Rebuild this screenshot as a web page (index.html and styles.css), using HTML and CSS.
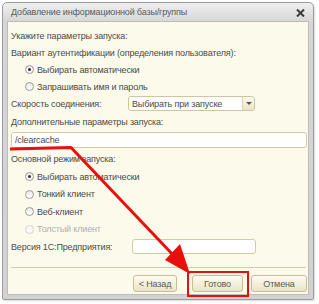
FILE: index.html
```html
<!DOCTYPE html>
<html lang="ru">
<head>
    <meta charset="UTF-8">
    <title>Добавление информационной базы/группы</title>
    <link rel="stylesheet" href="styles.css">
</head>
<body>
    <div class="window">
        <div class="titlebar">
            <span class="title">Добавление информационной базы/группы</span>
            <svg class="close" width="9" height="8" viewBox="0 0 9 8">
                <path d="M1 0.5 L8 7.5 M8 0.5 L1 7.5" stroke="#3a3a3a" stroke-width="2"/>
            </svg>
        </div>
        <div class="content">
            <div class="line">Укажите параметры запуска:</div>
            <div class="line">Вариант аутентификации (определения пользователя):</div>
            <div class="line radio"><span class="dot checked"></span>Выбирать автоматически</div>
            <div class="line radio"><span class="dot"></span>Запрашивать имя и пароль</div>

            <div class="line field-row speed">
                <span class="field-label">Скорость соединения:</span>
                <div class="select">
                    <span class="select-text">Выбирать при запуске</span>
                    <span class="select-btn"><span class="caret"></span></span>
                </div>
            </div>

            <div class="line tall">Дополнительные параметры запуска:</div>
            <div class="input wide">/clearcache</div>

            <div class="line main-mode">Основной режим запуска:</div>
            <div class="line radio"><span class="dot checked"></span>Выбирать автоматически</div>
            <div class="line radio h18"><span class="dot"></span>Тонкий клиент</div>
            <div class="line radio"><span class="dot"></span>Веб-клиент</div>
            <div class="line radio h18 disabled"><span class="dot"></span>Толстый клиент</div>

            <div class="line field-row version">
                <span class="field-label">Версия 1С:Предприятия:</span>
                <div class="input short"></div>
            </div>

            <div class="separator"></div>

            <div class="buttons">
                <button class="btn back">&lt; Назад</button>
                <button class="btn done">Готово</button>
                <button class="btn cancel">Отмена</button>
            </div>
        </div>
    </div>

    <!-- red annotation drawn over the dialog -->
    <svg class="annot" width="319" height="304" viewBox="0 0 319 304">
        <polyline points="10,149 71,147.5 175,257" fill="none" stroke="#e8100c" stroke-width="3" stroke-linejoin="round"/>
        <polygon points="190,274 165,260 180,244" fill="#e8100c"/>
        <rect x="188" y="272" width="60" height="24" fill="none" stroke="#e8100c" stroke-width="2"/>
    </svg>
</body>
</html>
```

FILE: styles.css
```css
* {
    box-sizing: border-box;
}

body {
    margin: 0;
    width: 319px;
    height: 304px;
    overflow: hidden;
    position: relative;
    background: #ffffff;
    font-family: "Liberation Sans", Arial, sans-serif;
    font-size: 9px;
    letter-spacing: -0.15px;
    color: #4a4a4a;
}

.window {
    margin: 2px 0 0 2px;
    width: 312px;
    height: 298px;
    border: 1px solid #9c9c9c;
    border-radius: 5px 5px 2px 2px;
    background: linear-gradient(#efefef, #d6d6d6 19px, #d2d2d2);
    padding: 0 4px 4px;
    display: flex;
    flex-direction: column;
    box-shadow: 1px 1px 2px rgba(0, 0, 0, 0.15);
}

.titlebar {
    height: 18px;
    display: flex;
    align-items: center;
    justify-content: space-between;
    padding: 0 4px 0 4px;
}

.title {
    color: #5a5a5a;
}

.close {
    margin-top: 1px;
}

.content {
    flex: 1;
    background: #fcfaeb;
    border: 1px solid #bcbcbc;
    padding: 5px 1px 0 3px;
    display: flex;
    flex-direction: column;
}

.line {
    height: 17px;
    display: flex;
    align-items: center;
    white-space: nowrap;
}

.line.tall {
    height: 19px;
}

.line.h18 {
    height: 18px;
}

.line.main-mode {
    height: 18px;
    margin-top: 1px;
}

.radio {
    padding-left: 14px;
}

.radio.disabled {
    color: #b0b0b0;
}

.dot {
    width: 9px;
    height: 9px;
    border-radius: 50%;
    border: 1px solid #9a9a9a;
    background: linear-gradient(#e9e9e9, #ffffff);
    margin-right: 3px;
    display: flex;
    align-items: center;
    justify-content: center;
}

.disabled .dot {
    border-color: #d2d2d2;
    background: #fbfbf6;
}

.dot.checked::after {
    content: "";
    width: 3px;
    height: 3px;
    border-radius: 50%;
    background: #333333;
}

.field-row .field-label {
    width: 117px;
}

.version .field-label {
    width: 121px;
}

.select {
    width: 127px;
    height: 15px;
    border: 1px solid #cfc6a0;
    border-radius: 3px;
    background: #ffffff;
    display: flex;
    align-items: center;
    overflow: hidden;
}

.select-text {
    flex: 1;
    padding-left: 3px;
    color: #4a4a4a;
}

.select-btn {
    width: 12px;
    height: 100%;
    border-left: 1px solid #ddd5b4;
    background: linear-gradient(#fbf8ea, #ece5c6);
    display: flex;
    align-items: center;
    justify-content: center;
}

.caret {
    width: 0;
    height: 0;
    border-left: 3px solid transparent;
    border-right: 3px solid transparent;
    border-top: 3px solid #555555;
}

.input {
    height: 16px;
    border: 1px solid #d3cba6;
    border-radius: 3px;
    background: #ffffff;
    display: flex;
    align-items: center;
    padding-left: 3px;
}

.input.wide {
    margin: 1px 0 1px 0;
}

.input.short {
    width: 124px;
    height: 15px;
}

.separator {
    margin-top: 12px;
    border-top: 1px solid #d4cda9;
    margin-right: 1px;
}

.buttons {
    margin-top: 7px;
    display: flex;
    justify-content: flex-end;
}

.btn {
    height: 17px;
    padding: 0;
    border: 1px solid #c7be96;
    border-radius: 3px;
    background: linear-gradient(#fefcf2, #ebe4c6);
    font-family: "Liberation Sans", Arial, sans-serif;
    font-size: 9px;
    letter-spacing: -0.15px;
    color: #5a5a5a;
}

.btn.back {
    width: 44px;
    margin-right: 15px;
}

.btn.done {
    width: 51px;
    margin-right: 8px;
}

.btn.cancel {
    width: 56px;
}

.annot {
    position: absolute;
    left: 0;
    top: 0;
    pointer-events: none;
}
```
